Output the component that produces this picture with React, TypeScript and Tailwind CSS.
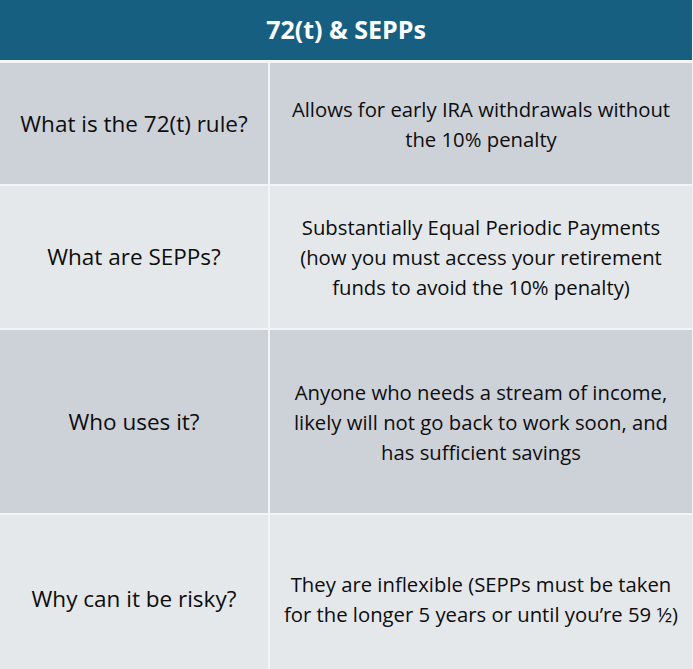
import React from 'react';

interface Row {
  question: string;
  answer: string[];
  height: string;
  shade: 'dark' | 'light';
}

const rows: Row[] = [
  {
    question: 'What is the 72(t) rule?',
    answer: ['Allows for early IRA withdrawals without', 'the 10% penalty'],
    height: 'h-[121px]',
    shade: 'dark',
  },
  {
    question: 'What are SEPPs?',
    answer: [
      'Substantially Equal Periodic Payments',
      '(how you must access your retirement',
      'funds to avoid the 10% penalty)',
    ],
    height: 'h-[142px]',
    shade: 'light',
  },
  {
    question: 'Who uses it?',
    answer: [
      'Anyone who needs a stream of income,',
      'likely will not go back to work soon, and',
      'has sufficient savings',
    ],
    height: 'h-[183px]',
    shade: 'dark',
  },
  {
    question: 'Why can it be risky?',
    answer: [
      'They are inflexible (SEPPs must be taken',
      'for the longer 5 years or until you\u2019re 59 \u00bd)',
    ],
    height: 'h-[168px]',
    shade: 'light',
  },
];

export default function App() {
  return (
    <div className="w-[693px] bg-[#f3f4f5] pr-[1px] font-['Open_Sans',sans-serif] text-[#0d0d0d]">
      <div className="flex h-[60px] items-center justify-center bg-[#175f80] text-[25px] font-bold text-white">
        72(t) &amp; SEPPs
      </div>
      <div className="mt-[3px] grid grid-cols-[268px_422px] gap-[2px]">
        {rows.map((row) => {
          const bg = row.shade === 'dark' ? 'bg-[#cdd2d9]' : 'bg-[#e5e8eb]';
          return (
            <React.Fragment key={row.question}>
              <div className={`flex items-center justify-center text-[22.5px] ${row.height} ${bg}`}>
                {row.question}
              </div>
              <div className={`flex flex-col items-center justify-center text-center text-[20.3px] leading-[30px] ${row.height} ${bg}`}>
                {row.answer.map((line) => (
                  <span key={line} className="whitespace-nowrap">{line}</span>
                ))}
              </div>
            </React.Fragment>
          );
        })}
      </div>
    </div>
  );
}
